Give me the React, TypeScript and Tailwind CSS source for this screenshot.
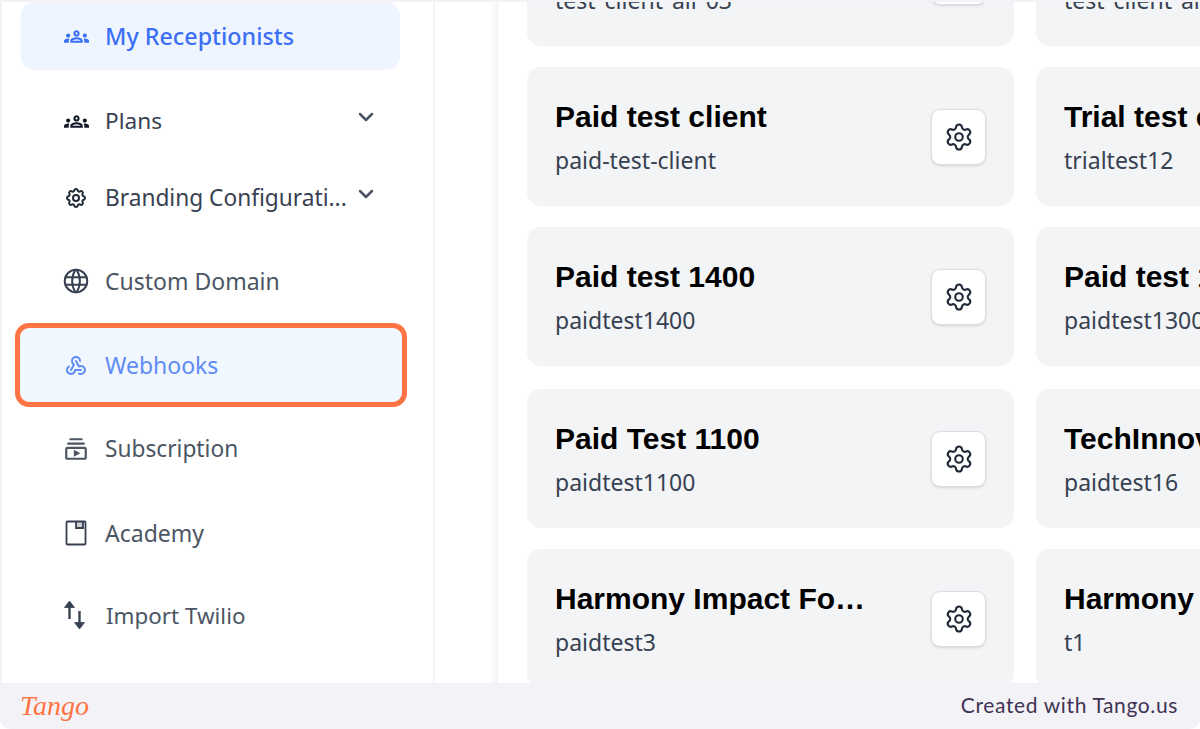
import { ChevronDown, Settings } from 'lucide-react';
import { MdOutlineGroups, MdOutlineSubscriptions } from 'react-icons/md';
import { HiOutlineCog } from 'react-icons/hi';
import { TbWebhook, TbWorld } from 'react-icons/tb';
import type { ReactNode } from 'react';

function AcademyIcon() {
  return (
    <svg width="22" height="26" viewBox="0 0 22 26" fill="none" stroke="currentColor" strokeWidth="1.8">
      <rect x="1.5" y="1.5" width="19" height="23" rx="1" />
      <path d="M11 2v6h7V2" fill="currentColor" fillOpacity="0.25" />
    </svg>
  );
}

function SwapIcon() {
  return (
    <svg width="24" height="30" viewBox="0 0 24 30" fill="currentColor" stroke="currentColor" strokeWidth="2.4" className="-translate-x-[1px] -translate-y-[2px]">
      <path d="M6.5 19V5" />
      <path d="M1.5 7.5 6.5 1l5 6.5z" strokeWidth="0.8" />
      <path d="M16.5 11v14" />
      <path d="M11.5 22.5 16.5 29l5-6.5z" strokeWidth="0.8" />
    </svg>
  );
}

type NavItem = { label: string; icon: ReactNode; top: string; tone: string; text: string; chevron?: boolean };

const navItems: NavItem[] = [
  { label: 'Plans', icon: <MdOutlineGroups size={25} className="shrink-0 text-[#111827]" />, top: 'mt-[17px]', tone: 'text-[#374151]', text: 'text-[22.6px]', chevron: true },
  { label: 'Branding Configurati...', icon: <HiOutlineCog size={24} className="shrink-0 text-[#1f2937]" />, top: 'mt-[9px]', tone: 'text-[#374151]', text: 'text-[22.7px]', chevron: true },
  { label: 'Custom Domain', icon: <TbWorld size={30} strokeWidth={1.6} className="shrink-0 text-[#374151]" />, top: 'mt-[15px]', tone: 'text-[#4b5563]', text: 'text-[23px]' },
];

const lowerItems: NavItem[] = [
  { label: 'Subscription', icon: <MdOutlineSubscriptions size={26} className="shrink-0 text-[#4b5563]" />, top: 'mt-[8px]', tone: 'text-[#4b5563]', text: 'text-[22.7px]' },
  { label: 'Academy', icon: <AcademyIcon />, top: 'mt-[16px]', tone: 'text-[#4b5563]', text: 'text-[23px]' },
  { label: 'Import Twilio', icon: <SwapIcon />, top: 'mt-[16px]', tone: 'text-[#4b5563]', text: 'text-[22.4px] translate-x-[1px] -translate-y-[1px]' },
];

function NavRow({ item }: { item: NavItem }) {
  return (
    <div className={`relative flex h-[68px] items-center pl-[43px] ${item.tone} ${item.top}`}>
      <span className="flex w-[24px] shrink-0 justify-center text-[#374151]">{item.icon}</span>
      <span className={`ml-[17px] whitespace-nowrap leading-none ${item.text}`}>{item.label}</span>
      {item.chevron && (
        <ChevronDown size={24} strokeWidth={2.5} className="absolute left-[333px] top-[18px] text-[#4b5563]" />
      )}
    </div>
  );
}

const clients = [
  ['test client all 03', 'test client all 03', 'test client all 03', 'test client all 04'],
  ['Paid test client', 'paid-test-client', 'Trial test client', 'trialtest12'],
  ['Paid test 1400', 'paidtest1400', 'Paid test 1300', 'paidtest1300'],
  ['Paid Test 1100', 'paidtest1100', 'TechInnovate', 'paidtest16'],
  ['Harmony Impact Foundation', 'paidtest3', 'Harmony Impact', 't1'],
];

const rowTops = ['-mt-[95px]', 'mt-[21px]', 'mt-[21px]', 'mt-[23px]', 'mt-[21px]'];

function ClientCard({ title, slug }: { title: string; slug: string }) {
  return (
    <div className="flex h-[139px] w-[487px] shrink-0 items-center justify-between rounded-[14px] bg-[#f3f4f6] pl-[28px] pr-[28px]">
      <div className="w-[314px] pt-[3px]">
        <div className="truncate font-['Liberation_Sans'] text-[30px] font-bold leading-[34px] text-black">{title}</div>
        <div className="mt-[9px] text-[23px] leading-[34px] text-[#374151] [word-spacing:3px]">{slug}</div>
      </div>
      <button className="flex h-[56px] w-[55px] items-center justify-center rounded-[9px] border border-[#dcdee2] bg-white shadow-sm">
        <Settings size={30} strokeWidth={1.7} className="text-[#1f2937]" />
      </button>
    </div>
  );
}

export default function App() {
  return (
    <div className="flex h-[729px] w-[1200px] flex-col overflow-hidden bg-white font-['Noto_Sans',sans-serif]">
      <div className="flex min-h-0 flex-1 border-l-2 border-t-2 border-[#f3f2f7]">
        <aside className="w-[433px] shrink-0 border-r-2 border-[#f3f4f6] pl-[19px]">
          <div className="flex h-[68px] w-[379px] items-center rounded-[14px] bg-[#eef5ff] pl-[43px] text-[#3b6ff5]">
            <span className="flex w-[24px] shrink-0 justify-center">
              <MdOutlineGroups size={25} className="shrink-0" />
            </span>
            <span className="ml-[17px] translate-y-[1px] text-[23.3px] font-medium leading-none">My Receptionists</span>
          </div>
          {navItems.map((item) => (
            <NavRow key={item.label} item={item} />
          ))}
          <div className="-ml-[6px] mt-[8px] flex h-[84px] w-[392px] items-center rounded-[14px] border-[5px] border-[#ff7444] bg-[#f0f7ff] pl-[44px] text-[#5f8cf2]">
            <span className="flex w-[24px] shrink-0 justify-center">
              <TbWebhook size={24} strokeWidth={2} className="shrink-0" />
            </span>
            <span className="ml-[17px] text-[23px] leading-none">Webhooks</span>
          </div>
          {lowerItems.map((item) => (
            <NavRow key={item.label} item={item} />
          ))}
        </aside>
        <div className="w-[55px] shrink-0" />
        <div className="w-[8px] shrink-0 bg-gradient-to-r from-white to-[#f3f4f6]" />
        <main className="min-w-0 flex-1 overflow-hidden pl-[29px]">
          {clients.map((row, i) => (
            <div key={row[0] + i} className={`flex gap-[22px] ${rowTops[i]}`}>
              <ClientCard title={row[0]} slug={row[1]} />
              <ClientCard title={row[2]} slug={row[3]} />
            </div>
          ))}
        </main>
      </div>
      <footer className="flex h-[46px] shrink-0 items-center justify-between rounded-b-[10px] bg-[#f3f2f7] pl-[20px] pr-[22px]">
        <span className="font-['Liberation_Serif'] text-[28px] italic leading-none text-[#ff7444]">Tango</span>
        <span className="-translate-y-[1px] font-['Lato'] text-[21px] tracking-[0.03em] text-[#3f3354]">Created with Tango.us</span>
      </footer>
    </div>
  );
}
